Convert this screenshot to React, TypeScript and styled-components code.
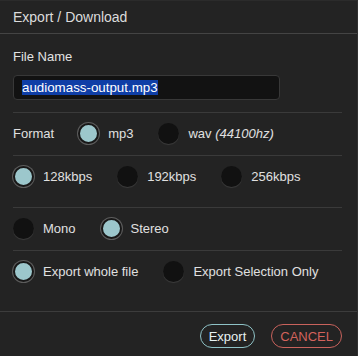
import React from 'react';
import styled, { createGlobalStyle } from 'styled-components';

const GlobalStyle = createGlobalStyle`
  html, body {
    margin: 0;
    padding: 0;
    background: #232323;
  }
  body {
    font-family: 'Liberation Sans', Arial, sans-serif;
  }
`;

const Dialog = styled.div`
  width: 358px;
  height: 356px;
  box-sizing: border-box;
  background: #232323;
  border-top: 1px solid #2b2b2b;
  border-right: 1px solid #303030;
  color: #dedede;
  font-size: 13px;
  overflow: hidden;
  display: flex;
  flex-direction: column;
`;

const Header = styled.div`
  height: 32px;
  line-height: 32px;
  padding-left: 13px;
  font-size: 14px;
  color: #dcdcdc;
  border-bottom: 1px solid #444;
`;

const Body = styled.div`
  padding: 0 15px 0 13px;
`;

const FieldLabel = styled.div`
  margin-top: 15px;
  line-height: 16px;
  color: #e2e2e2;
`;

const TextField = styled.div`
  margin-top: 10px;
  width: 267px;
  height: 25px;
  box-sizing: border-box;
  border: 1px solid #383838;
  border-radius: 4px;
  background: #121212;
  padding-left: 8px;
  display: flex;
  align-items: center;
  font-size: 13.333px;
  color: #fff;
`;

const Selected = styled.span`
  background: #0f3ea6;
  line-height: 15px;
`;

const Row = styled.div<{ $bottom: number; $first?: boolean }>`
  display: flex;
  align-items: center;
  gap: 25px;
  border-top: 1px solid #3a3a3a;
  margin-top: ${(p) => (p.$first ? 12 : 0)}px;
  padding: 10px 0 ${(p) => p.$bottom}px;
  height: 21px;
`;

const RowLabel = styled.span`
  color: #e0e0e0;
  margin-right: -1px;
`;

const Option = styled.label`
  display: inline-flex;
  align-items: center;
  gap: 9px;
  color: #e0e0e0;
  cursor: pointer;

  em {
    font-style: italic;
  }
`;

const Radio = styled.span<{ $on?: boolean }>`
  width: 21px;
  height: 21px;
  box-sizing: border-box;
  border-radius: 50%;
  flex: none;
  ${(p) =>
    p.$on
      ? `
    background: #9cc7cc;
    border: 2px solid #181818;
    box-shadow: 0 0 0 1px #5c5c5c;
  `
      : `
    background: #111;
    box-shadow: 0 1px 1px rgba(255, 255, 255, 0.12);
  `}
`;

const Footer = styled.div`
  margin-top: auto;
  border-top: 1px solid #3c3c3c;
  height: 45px;
  padding: 12px 15px 0 0;
  box-sizing: border-box;
  display: flex;
  justify-content: flex-end;
  align-items: flex-start;
  gap: 16px;
`;

const PillButton = styled.button<{ $tone: string }>`
  height: 24px;
  padding: 0 8px;
  border-radius: 12px;
  background: transparent;
  border: 1px solid ${(p) => p.$tone};
  color: ${(p) => (p.$tone === '#c8625c' ? '#d2625c' : '#e8f2f2')};
  font-family: 'Liberation Sans', Arial, sans-serif;
  font-size: 13px;
  cursor: pointer;
`;

const Choice = ({ on, children }: { on?: boolean; children: React.ReactNode }) => (
  <Option>
    <Radio $on={on} />
    <span>{children}</span>
  </Option>
);

export default function App() {
  return (
    <>
      <GlobalStyle />
      <Dialog>
        <Header>Export / Download</Header>
        <Body>
          <FieldLabel>File Name</FieldLabel>
          <TextField>
            <Selected>audiomass-output.mp3</Selected>
          </TextField>
          <Row $first $bottom={11}>
            <RowLabel>Format</RowLabel>
            <Choice on>mp3</Choice>
            <Choice>
              wav <em>(44100hz)</em>
            </Choice>
          </Row>
          <Row $bottom={20}>
            <Choice on>128kbps</Choice>
            <Choice>192kbps</Choice>
            <Choice>256kbps</Choice>
          </Row>
          <Row $bottom={11}>
            <Choice>Mono</Choice>
            <Choice on>Stereo</Choice>
          </Row>
          <Row $bottom={28}>
            <Choice on>Export whole file</Choice>
            <Choice>Export Selection Only</Choice>
          </Row>
        </Body>
        <Footer>
          <PillButton $tone="#8ec2c6">Export</PillButton>
          <PillButton $tone="#c8625c">CANCEL</PillButton>
        </Footer>
      </Dialog>
    </>
  );
}
